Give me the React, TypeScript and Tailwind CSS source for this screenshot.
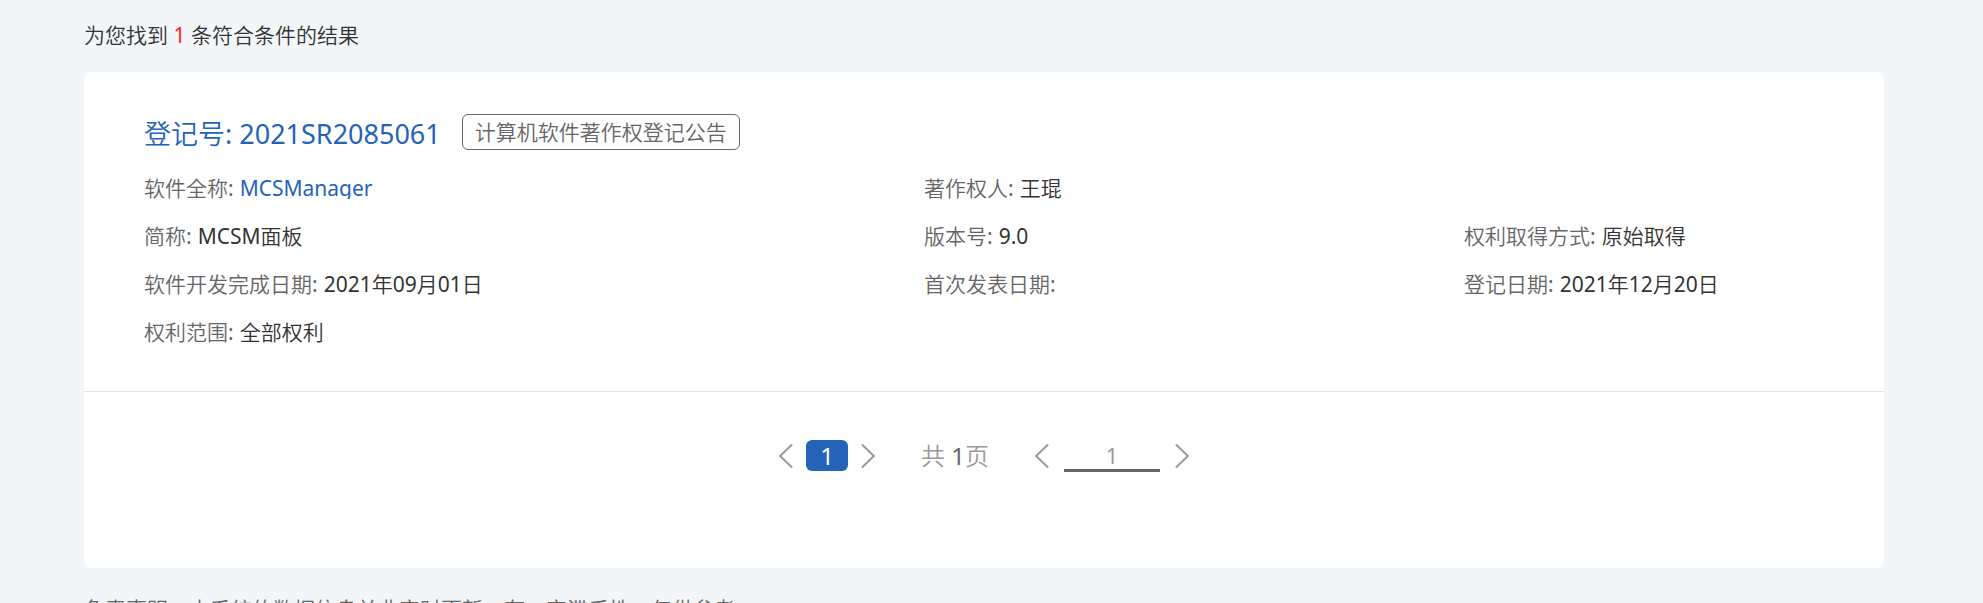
import type { ReactNode } from 'react';

function Chevron({ direction, label }: { direction: 'left' | 'right'; label: string }) {
  return (
    <button type="button" aria-label={label} className="flex h-8 w-4 items-center justify-center text-[#999]">
      <svg width="14" height="24" viewBox="0 0 14 24" fill="none" stroke="currentColor" strokeWidth="1.9" strokeLinecap="round">
        <path d={direction === 'left' ? 'M12.5 1 1.2 12l11.3 11' : 'M1.5 1l11.3 11L1.5 23'} />
      </svg>
    </button>
  );
}

function Field({ label, className = '', children }: { label: string; className?: string; children?: ReactNode }) {
  return (
    <div className={`flex h-12 items-center gap-[6px] whitespace-nowrap ${className}`}>
      <dt className="text-[#666]">{label}:</dt>
      <dd className="flex text-[#333]">{children}</dd>
    </div>
  );
}

export default function App() {
  return (
    <div className="h-screen overflow-hidden bg-[#f2f6f9] pr-[99px] pl-[84px] font-['Noto_Sans','Noto_Sans_CJK_SC_DemiLight','Noto_Sans_CJK_SC',sans-serif] text-[21px] leading-[32px] text-[#333]">
      <p className="pt-[19px] pb-[21px]">
        为您找到 <span className="text-[#f22]">1</span> 条符合条件的结果
      </p>
      <main className="rounded-lg bg-white pb-[96px]">
        <section className="border-b border-[#e1e3e4] px-[60px] pt-[42px] pb-[35px]">
          <div className="flex items-center gap-[21px]">
            <h2 className="pt-1 text-[27px] leading-[32px]">
              <a href="#detail" className="text-[#2463b8]">登记号: 2021SR2085061</a>
            </h2>
            <span className="rounded-md border border-[#666] px-3 leading-[34px] text-[#666]">计算机软件著作权登记公告</span>
          </div>
          <dl className="grid grid-cols-[13fr_9fr_6fr] pt-[14px]">
            <Field label="软件全称">
              <a href="#detail" className="h-[21px] overflow-hidden leading-[21px] text-[#2463b8]">MCSManager</a>
            </Field>
            <Field label="著作权人" className="col-span-2">王琨</Field>
            <Field label="简称">MCSM面板</Field>
            <Field label="版本号">9.0</Field>
            <Field label="权利取得方式">原始取得</Field>
            <Field label="软件开发完成日期">2021年09月01日</Field>
            <Field label="首次发表日期" />
            <Field label="登记日期">2021年12月20日</Field>
            <Field label="权利范围">全部权利</Field>
          </dl>
        </section>
        <nav aria-label="分页" className="flex items-center justify-center pt-[47px] text-2xl leading-[31px]">
          <div className="flex items-center gap-3">
            <Chevron direction="left" label="上一页" />
            <button type="button" aria-current="page" className="h-[31px] w-[42px] rounded-md bg-[#2463b8] text-white">1</button>
            <Chevron direction="right" label="下一页" />
          </div>
          <p className="mx-[45px] text-[#999]">
            共 <span className="text-[#666]">1</span>页
          </p>
          <div className="flex items-center gap-[14px]">
            <Chevron direction="left" label="减少页码" />
            <input aria-label="页码" defaultValue="1" className="h-[33px] w-24 border-b-3 border-[#666] pt-1 text-center text-[21px] text-[#999] outline-none" />
            <Chevron direction="right" label="增加页码" />
          </div>
        </nav>
      </main>
      <p className="pt-[25px] text-[#666]">免责声明：本系统的数据信息并非实时更新，有一定滞后性，仅供参考。</p>
    </div>
  );
}
